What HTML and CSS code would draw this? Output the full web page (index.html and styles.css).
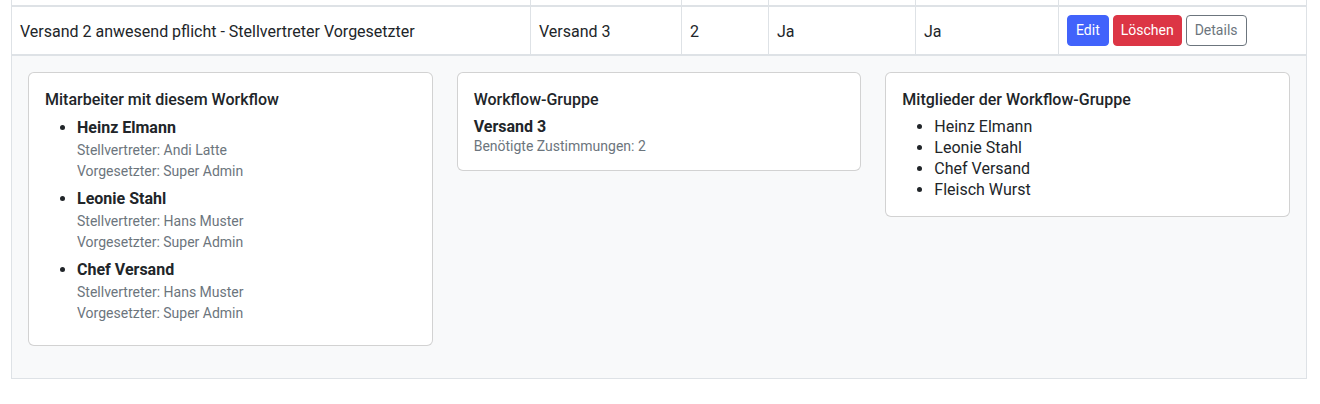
FILE: index.html
```html
<!DOCTYPE html>
<html lang="de">
<head>
<meta charset="utf-8">
<title>Workflows</title>
<link rel="stylesheet" href="styles.css">
</head>
<body>
<div class="page">
  <table class="wf-table">
    <colgroup>
      <col class="col-name">
      <col class="col-group">
      <col class="col-count">
      <col class="col-a">
      <col class="col-b">
      <col class="col-actions">
    </colgroup>
    <tbody>
      <tr class="prev-row">
        <td></td><td></td><td></td><td></td><td></td><td></td>
      </tr>
      <tr class="main-row">
        <td>Versand 2 anwesend pflicht - Stellvertreter Vorgesetzter</td>
        <td>Versand 3</td>
        <td>2</td>
        <td>Ja</td>
        <td>Ja</td>
        <td>
          <div class="actions">
            <button class="btn btn-edit">Edit</button>
            <button class="btn btn-delete">Löschen</button>
            <button class="btn btn-details">Details</button>
          </div>
        </td>
      </tr>
      <tr class="detail-row">
        <td colspan="6">
          <div class="cards">
            <div class="card">
              <h6 class="card-title">Mitarbeiter mit diesem Workflow</h6>
              <ul class="emp-list">
                <li>
                  <div class="emp-name">Heinz Elmann</div>
                  <div class="emp-meta">Stellvertreter: Andi Latte</div>
                  <div class="emp-meta">Vorgesetzter: Super Admin</div>
                </li>
                <li>
                  <div class="emp-name">Leonie Stahl</div>
                  <div class="emp-meta">Stellvertreter: Hans Muster</div>
                  <div class="emp-meta">Vorgesetzter: Super Admin</div>
                </li>
                <li>
                  <div class="emp-name">Chef Versand</div>
                  <div class="emp-meta">Stellvertreter: Hans Muster</div>
                  <div class="emp-meta">Vorgesetzter: Super Admin</div>
                </li>
              </ul>
            </div>
            <div class="card">
              <h6 class="card-title">Workflow-Gruppe</h6>
              <div class="group-name">Versand 3</div>
              <div class="group-meta">Benötigte Zustimmungen: 2</div>
            </div>
            <div class="card">
              <h6 class="card-title">Mitglieder der Workflow-Gruppe</h6>
              <ul class="member-list">
                <li>Heinz Elmann</li>
                <li>Leonie Stahl</li>
                <li>Chef Versand</li>
                <li>Fleisch Wurst</li>
              </ul>
            </div>
          </div>
        </td>
      </tr>
    </tbody>
  </table>
</div>
</body>
</html>
```
FILE: styles.css
```css
* {
  box-sizing: border-box;
}

body {
  margin: 0;
  background: #fff;
  color: #212529;
  font-family: Roboto, "Liberation Sans", Arial, sans-serif;
  font-size: 16px;
  line-height: 24px;
}

.page {
  padding-left: 11px;
}

.wf-table {
  border-collapse: separate;
  border-spacing: 0;
  table-layout: fixed;
  width: 1296px;
}

.col-name { width: 520px; }
.col-group { width: 151px; }
.col-count { width: 87px; }
.col-a { width: 147px; }
.col-b { width: 143px; }
.col-actions { width: 248px; }

.wf-table td {
  border-right: 1px solid #dee2e6;
  border-bottom: 2px solid #dee2e6;
  padding: 8px;
  vertical-align: middle;
  white-space: nowrap;
}

.wf-table td:first-child {
  border-left: 1px solid #dee2e6;
}

.prev-row td {
  padding: 0;
  height: 7px;
}

.main-row td {
  padding: 9px 8px 7px;
}

.actions {
  display: flex;
  gap: 4px;
  margin: -1px 0 1px;
}

.btn {
  font-family: inherit;
  font-size: 14px;
  line-height: 21px;
  padding: 4px 8px;
  border: 1px solid transparent;
  border-radius: 4px;
  cursor: pointer;
}

.btn-edit {
  background: #4163fb;
  border-color: #4163fb;
  color: #fff;
}

.btn-delete {
  background: #dc3545;
  border-color: #dc3545;
  color: #fff;
  padding: 4px 7px;
}

.btn-details {
  background: transparent;
  border-color: #6c757d;
  color: #6c757d;
}

.wf-table .detail-row td {
  background: #f8f9fa;
  border-bottom: 1px solid #dee2e6;
  border-left: 1px solid #dee2e6;
  padding: 16px 16px 32px;
  vertical-align: top;
  white-space: normal;
}

.cards {
  display: grid;
  grid-template-columns: repeat(3, 1fr);
  gap: 24px;
  align-items: start;
}

.card {
  background: #fff;
  border: 1px solid rgba(0, 0, 0, 0.175);
  border-radius: 6px;
  padding: 16px;
}

.card-title {
  margin: 0 0 5px;
  font-size: 16px;
  font-weight: 500;
  line-height: 22px;
}

.emp-list {
  margin: 0;
  padding-left: 32px;
}

.emp-list li {
  margin-bottom: 5px;
}

.emp-name {
  font-weight: 700;
  line-height: 24px;
}

.emp-meta {
  font-size: 14px;
  line-height: 21px;
  color: #6c757d;
}

.group-name {
  margin-top: 2px;
  font-weight: 700;
  line-height: 22px;
}

.group-meta {
  font-size: 14px;
  line-height: 16px;
  color: #6c757d;
}

.member-list {
  margin: 2px 0 0;
  padding-left: 32px;
}

.member-list li {
  line-height: 21px;
}
```
